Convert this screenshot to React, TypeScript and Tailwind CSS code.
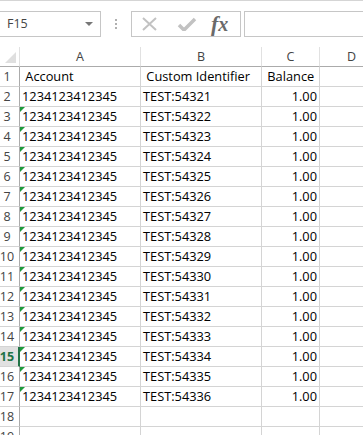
const rows = Array.from({ length: 16 }, (_, i) => ({
  n: i + 2,
  account: "1234123412345",
  id: `TEST:${54321 + i}`,
  balance: "1.00",
  flag: i > 0,
}));

const font = "font-['Open_Sans',sans-serif]";

function RowHead({ n, active }: { n: number; active?: boolean }) {
  return active ? (
    <div className="flex h-[20px] w-[20px] shrink-0 items-end justify-center border-b border-r-2 border-b-[#d4d4d4] border-r-[#217346] bg-[#e1e1e1] pb-[1px] pr-[4px] text-[12.5px] font-bold leading-[17px] text-[#217346]">
      {n}
    </div>
  ) : (
    <div className="flex h-[20px] w-[20px] shrink-0 items-end justify-center border-b border-r border-b-[#d4d4d4] border-r-[#ababab] pb-[1px] pr-[5px] text-[12.5px] leading-[17px] text-[#444]">
      {n}
    </div>
  );
}

function Cell({ w, children, right, flag }: { w: string; children?: React.ReactNode; right?: boolean; flag?: boolean }) {
  return (
    <div
      className={`relative flex h-[20px] shrink-0 items-end overflow-hidden whitespace-pre border-b border-r border-[#d4d4d4] px-[2px] pb-[1px] text-[12.8px] leading-[17px] text-black ${w} ${right ? "justify-end" : ""}`}
    >
      {flag && <span className="absolute left-0 top-0 h-0 w-0 border-r-[5px] border-t-[5px] border-r-transparent border-t-[#1e9a3c]" />}
      {children}
    </div>
  );
}

export default function App() {
  return (
    <div className={`h-[435px] w-[363px] overflow-hidden border-t border-[#d5d5d5] bg-white ${font}`}>
      {/* formula bar */}
      <div className="mt-[10px] flex h-[26px] items-stretch">
        <div className="-ml-px flex w-[102px] items-center justify-between border border-[#c6c6c6] pl-[7px] pr-[7px] text-[12.5px] text-[#444]">
          <span>F15</span>
          <span className="h-0 w-0 border-x-[4px] border-t-[4px] border-x-transparent border-t-[#777]" />
        </div>
        <div className="flex w-[30px] flex-col items-center justify-center gap-[2px]">
          <span className="h-[2px] w-[2px] bg-[#b0b0b0]" />
          <span className="h-[2px] w-[2px] bg-[#b0b0b0]" />
          <span className="h-[2px] w-[2px] bg-[#b0b0b0]" />
        </div>
        <div className="flex w-[110px] items-center border border-[#c6c6c6]">
          <svg width="20" height="14" viewBox="0 0 20 14" className="ml-[8px]">
            <path d="M3 1 L16 13 M16 1 L3 13" stroke="#c2c2c2" strokeWidth="2" fill="none" />
          </svg>
          <svg width="20" height="14" viewBox="0 0 20 14" className="ml-[17px]">
            <path d="M2 8 L7 13 L18 2" stroke="#c2c2c2" strokeWidth="3.5" fill="none" />
          </svg>
          <span className="ml-[14px] font-['Liberation_Serif',serif] text-[20px] font-bold italic leading-none text-[#6a6a6a]">
            <span className="text-[22px]">f</span>x
          </span>
        </div>
        <div className="ml-[3px] flex-1 border border-r-0 border-[#c6c6c6]" />
      </div>

      {/* sheet */}
      <div className="mt-[10px]">
        <div className="flex">
          <div className="relative h-[20px] w-[20px] shrink-0 border-b border-r border-b-[#ababab] border-r-[#e1e1e1]">
            <span className="absolute bottom-[3px] right-[3px] h-0 w-0 border-b-[11px] border-l-[11px] border-b-[#dfdfdf] border-l-transparent" />
          </div>
          {[
            ["A", "w-[121px]"],
            ["B", "w-[121px]"],
            ["C", "w-[58px]"],
            ["D", "w-[64px]"],
          ].map(([l, w]) => (
            <div
              key={l}
              className={`flex h-[20px] shrink-0 items-end justify-center border-b border-r border-b-[#ababab] border-r-[#e1e1e1] pb-[1px] text-[12.5px] leading-[17px] text-[#444] ${w}`}
            >
              {l}
            </div>
          ))}
        </div>

        <div className="flex">
          <RowHead n={1} />
          <Cell w="w-[121px]">{" Account"}</Cell>
          <Cell w="w-[121px]">{" Custom Identifier"}</Cell>
          <Cell w="w-[58px]">{" Balance"}</Cell>
          <Cell w="w-[64px]" />
        </div>

        {rows.map((r) => (
          <div key={r.n} className="flex">
            <RowHead n={r.n} active={r.n === 15} />
            <Cell w="w-[121px]" flag={r.flag}>
              {r.account}
            </Cell>
            <Cell w="w-[121px]">{r.id}</Cell>
            <Cell w="w-[58px]" right>
              {r.balance}
            </Cell>
            <Cell w="w-[64px]" />
          </div>
        ))}

        {[18, 19].map((n) => (
          <div key={n} className="flex">
            <RowHead n={n} />
            <Cell w="w-[121px]" />
            <Cell w="w-[121px]" />
            <Cell w="w-[58px]" />
            <Cell w="w-[64px]" />
          </div>
        ))}
      </div>
    </div>
  );
}
